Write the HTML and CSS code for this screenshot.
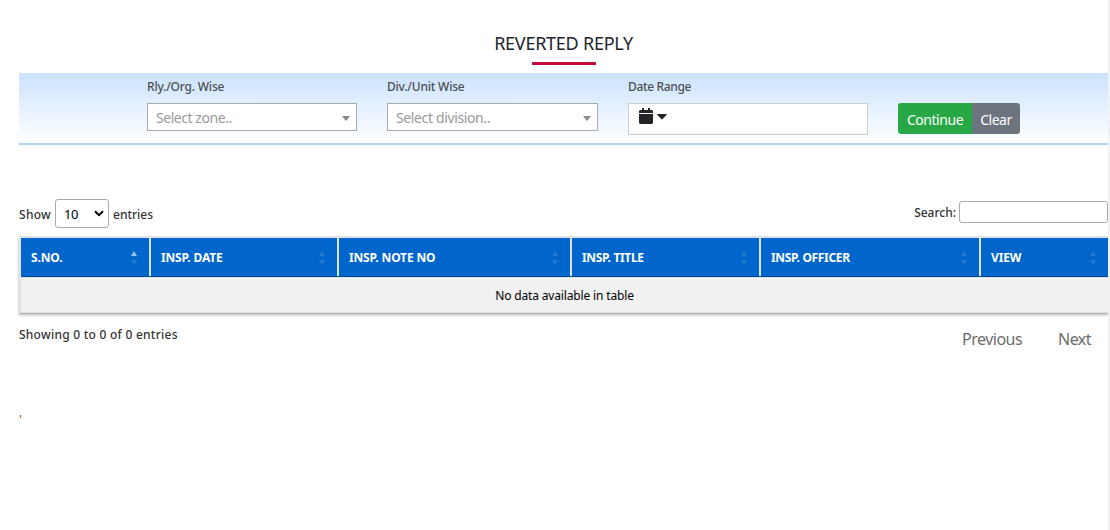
FILE: index.html
```html
<!DOCTYPE html>
<html lang="en">
<head>
<meta charset="utf-8">
<title>Reverted Reply</title>
<link rel="stylesheet" href="styles.css">
</head>
<body>
<main class="page">
  <h1 class="title"><span class="title-text">REVERTED REPLY</span></h1>
  <form class="filters">
    <div class="field field-zone">
      <span class="label label-zone">Rly./Org. Wise</span>
      <div class="select"><span class="ph-zone">Select zone..</span><i class="arrow"></i></div>
    </div>
    <div class="field field-division">
      <span class="label label-division">Div./Unit Wise</span>
      <div class="select"><span class="ph-division">Select division..</span><i class="arrow"></i></div>
    </div>
    <div class="field field-date">
      <span class="label label-date">Date Range</span>
      <div class="date">
        <svg class="calendar" width="14" height="16" viewBox="0 0 448 512" fill="#212529"><path d="M0 464c0 26.500 21.500 48 48 48h352c26.500 0 48-21.500 48-48V192H0v272zM448 112c0-26.500-21.500-48-48-48h-48V12c0-6.600-5.400-12-12-12h-40c-6.600 0-12 5.400-12 12v52H160V12c0-6.600-5.400-12-12-12h-40c-6.600 0-12 5.400-12 12v52H48c-26.500 0-48 21.500-48 48v48h448v-48z"/></svg>
        <svg class="caret" width="10" height="6" viewBox="0 0 10 6" fill="#212529"><path d="M.8 0h8.400q1 0 .3.900L5.600 5.100q-.6.600-1.200 0L.5.900Q-.2 0 .8 0z"/></svg>
      </div>
    </div>
    <div class="buttons"><button type="button" class="btn btn-go">Continue</button><button type="button" class="btn btn-clear">Clear</button></div>
  </form>
  <div class="tools">
    <div class="length"><span class="show">Show</span>
      <div class="length-select"><span>10</span><svg width="10" height="7" viewBox="0 0 10 7" fill="none" stroke="#000" stroke-width="2"><path d="M1 1.200 5 5.200 9 1.200"/></svg></div>
      <span class="entries">entries</span></div>
    <label class="search"><span class="search-text">Search:</span><input class="search-input" type="text"></label>
  </div>
  <div class="table">
    <div class="row">
      <div class="th"><span class="h-sno">S.NO.</span><svg class="sort sort-asc" width="6" height="14" viewBox="0 0 6 14"><path class="up" d="M0 5 3 0 6 5z"/><path class="down" d="M0 9h6L3 14z"/></svg></div>
      <div class="th"><span class="h-date">INSP. DATE</span><svg class="sort" width="6" height="14" viewBox="0 0 6 14"><path class="up" d="M0 5 3 0 6 5z"/><path class="down" d="M0 9h6L3 14z"/></svg></div>
      <div class="th"><span class="h-note">INSP. NOTE NO</span><svg class="sort" width="6" height="14" viewBox="0 0 6 14"><path class="up" d="M0 5 3 0 6 5z"/><path class="down" d="M0 9h6L3 14z"/></svg></div>
      <div class="th"><span class="h-title">INSP. TITLE</span><svg class="sort" width="6" height="14" viewBox="0 0 6 14"><path class="up" d="M0 5 3 0 6 5z"/><path class="down" d="M0 9h6L3 14z"/></svg></div>
      <div class="th"><span class="h-officer">INSP. OFFICER</span><svg class="sort" width="6" height="14" viewBox="0 0 6 14"><path class="up" d="M0 5 3 0 6 5z"/><path class="down" d="M0 9h6L3 14z"/></svg></div>
      <div class="th"><span class="h-view">VIEW</span><svg class="sort" width="6" height="14" viewBox="0 0 6 14"><path class="up" d="M0 5 3 0 6 5z"/><path class="down" d="M0 9h6L3 14z"/></svg></div>
    </div>
    <div class="empty"><span class="empty-text">No data available in table</span></div>
  </div>
  <div class="footer">
    <span class="info">Showing 0 to 0 of 0 entries</span>
    <nav class="pager"><span class="prev">Previous</span><span class="next">Next</span></nav>
  </div>
  <div class="stray">'</div>
</main>
</body>
</html>
```
FILE: styles.css
```css
* { box-sizing: border-box; }
body { margin: 0; background: #fff; overflow: hidden; font-family: "Noto Sans", sans-serif; font-size: 12px; line-height: 20px; color: #333; white-space: nowrap; }
.page { width: 1108px; height: 530px; padding-left: 19px; box-shadow: 2px 0 #f1f1f1; overflow: hidden; }
.title { margin: 0; height: 73px; padding: 30px 0 0; display: flex; flex-direction: column; align-items: center; font-size: 18px; line-height: 26px; font-weight: 400; color: #212529; }
.title::after { content: ""; width: 64px; height: 3px; margin-top: 6px; background: #c30c38; }
.title-text { letter-spacing: -.25px; }
.filters { height: 72px; padding: 4px 0 0 128px; display: flex; align-items: flex-start; background: linear-gradient(#cce2fd, #fff); border-bottom: 2px solid #add4f1; }
.field { display: flex; flex-direction: column; gap: 6px; }
.field-zone { width: 210px; margin-right: 30px; }
.field-division { width: 211px; margin-right: 30px; }
.field-date { width: 240px; margin-right: 30px; }
.label { font-weight: 500; color: #4b4f53; letter-spacing: -.2px; }
.label-date { letter-spacing: -.35px; }
.select { height: 28px; padding: 2px 6px 0 8px; display: flex; align-items: center; justify-content: space-between; border: 1px solid #aaa; background: #fff; color: #999; font-size: 14px; }
.ph-zone { letter-spacing: -.45px; }
.ph-division { letter-spacing: -.37px; }
.arrow { border: 4px solid transparent; border-top: 5px solid #888; border-bottom: 0; }
.date { height: 32px; padding: 4px 10px; display: flex; align-items: flex-start; gap: 4px; border: 1px solid #ccc; background: #fff; }
.caret { margin-top: 6px; }
.buttons { display: flex; margin-top: 26px; }
.btn { height: 31px; padding: 2px 0 0; border: 0; color: #fff; font: 14px/28px "Noto Sans", sans-serif; }
.btn-go { width: 74px; background: #28a745; border-radius: 3px 0 0 3px; letter-spacing: -.45px; }
.btn-clear { width: 48px; background: #6c757d; border-radius: 0 3px 3px 0; letter-spacing: -.5px; }
.tools { height: 91px; padding-top: 54px; display: flex; justify-content: space-between; align-items: flex-start; font-weight: 500; }
.length { display: flex; align-items: center; gap: 4px; }
.show { width: 32px; padding-top: 2px; letter-spacing: .3px; }
.entries { padding-top: 2px; }
.length-select { width: 54px; height: 29px; padding: 0 4px 0 8px; display: flex; align-items: center; justify-content: space-between; border: 1px solid #aaa; border-radius: 3px; color: #000; font-size: 13px; font-weight: 400; letter-spacing: -.5px; }
.length-select span { padding-top: 1px; }
.search { display: flex; align-items: center; gap: 3px; padding-top: 2px; }
.search-text { padding-top: 2px; }
.search-input { width: 149px; height: 22px; border: 1px solid #aaa; border-radius: 3px; background: #fff; }
.table { height: 77px; border: solid #dee2e6; border-width: 2px 0 1px 2px; background: #f1f1f1; box-shadow: 0 1px #b4b4b8, 0 2px 3px rgba(0,0,0,.3); clip-path: inset(0 0 -8px -6px); }
.row { height: 39px; display: grid; grid-template-columns: 130px 188px 233px 189px 220px 127px; background: #06c; border-bottom: 1px solid #004a94; }
.th { padding: 1px 12px 0 10px; display: flex; align-items: center; justify-content: space-between; border-right: 2px solid #dee2e6; color: #fff; font-weight: 700; font-size: 12px; letter-spacing: -.15px; }
.h-title, .h-officer { letter-spacing: -.33px; }
.th:last-child { border-right: 0; }
.sort { fill: #fff; fill-opacity: .13; }
.sort-asc .up { fill-opacity: .6; }
.empty { height: 35px; padding-top: 2px; display: flex; align-items: center; justify-content: center; border-top: 1px solid #dee2e6; color: #000; letter-spacing: -.15px; }
.footer { height: 74px; padding-top: 12px; display: flex; justify-content: space-between; align-items: flex-start; }
.info { font-weight: 500; letter-spacing: .25px; }
.pager { display: flex; gap: 36px; padding: 2px 17px 0 0; color: #6c6c6c; font-size: 16px; line-height: 24px; }
.prev { width: 60px; letter-spacing: -.5px; }
.next { width: 33px; letter-spacing: -.5px; }
.stray { margin-top: 23px; font-size: 12px; font-weight: 500; color: #9b6a35; }
```
